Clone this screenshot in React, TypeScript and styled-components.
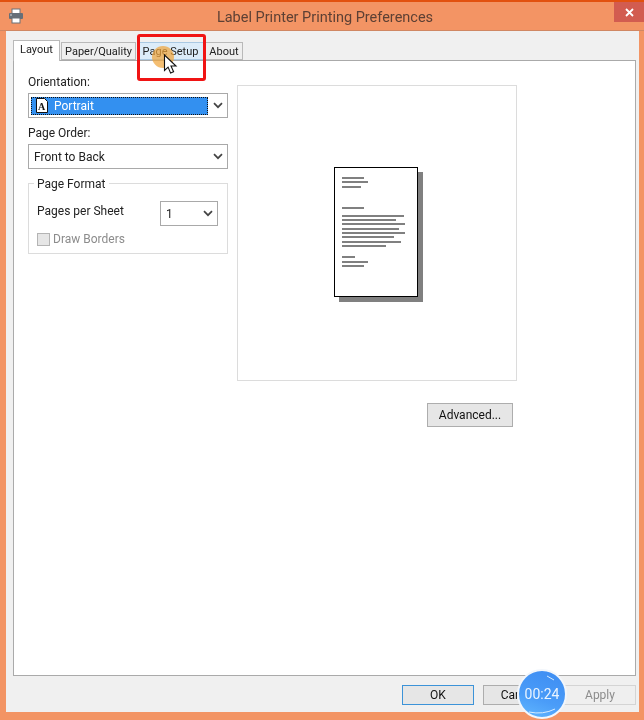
import styled, { createGlobalStyle } from "styled-components";

const GlobalStyle = createGlobalStyle`
  html, body {
    margin: 0;
    padding: 0;
    background: #f39464;
  }
  * {
    box-sizing: border-box;
  }
`;

const Screen = styled.div`
  position: relative;
  width: 644px;
  height: 720px;
  overflow: hidden;
  background: #f39464;
  font-family: Roboto, "Liberation Sans", sans-serif;
  font-size: 12px;
  color: #222;
  border-top: 2px solid #e2510f;
  filter: blur(0.3px);
`;
const TitleBar = styled.div`
  position: relative;
  height: 29px;
  display: flex;
  align-items: center;
  justify-content: center;
  padding: 2px 0 0 6px;
  font-size: 14.5px;
  color: #5d4034;
  border-bottom: 1px solid #d08763;
`;
const AppIcon = styled.svg`
  position: absolute;
  left: 8px;
  top: 6px;
`;
const CloseButton = styled.div`
  position: absolute;
  right: 0;
  top: 0;
  width: 30px;
  height: 20px;
  background: #d25c50;
  display: flex;
  align-items: center;
  justify-content: center;
`;
const Dialog = styled.div`
  margin: 0 5px 0 6px;
  height: 681px;
  background: #f0f0f0;
  padding: 8px 0 0 7px;
`;
const Tabs = styled.div`
  display: flex;
  align-items: flex-end;
  height: 21px;
  position: relative;
  z-index: 1;
  font-size: 11px;
`;
const Tab = styled.div<{ $active?: boolean; $hover?: boolean; $w: number }>`
  width: ${(p) => p.$w}px;
  height: ${(p) => (p.$active ? 21 : 18)}px;
  margin-right: 1px;
  margin-bottom: ${(p) => (p.$active ? -1 : 0)}px;
  padding-bottom: ${(p) => (p.$active ? 3 : 0)}px;
  border: 1px solid ${(p) => (p.$hover ? "#a9c8e2" : "#b9b9b9")};
  border-bottom: ${(p) => (p.$active ? "none" : undefined)};
  background: ${(p) => (p.$active ? "#fff" : p.$hover ? "#dcecf9" : "#efefef")};
  display: flex;
  align-items: center;
  justify-content: center;
  white-space: nowrap;
`;
const Panel = styled.div`
  width: 623px;
  height: 616px;
  background: #fff;
  border: 1px solid #aaa;
  padding: 12px 0 0 14px;
  display: flex;
  gap: 9px;
`;
const LeftColumn = styled.div`
  width: 200px;
  display: flex;
  flex-direction: column;
`;
const FieldLabel = styled.div<{ $top?: number }>`
  height: 16px;
  line-height: 18px;
  margin-top: ${(p) => p.$top ?? 0}px;
  margin-bottom: 4px;
`;
const Select = styled.div<{ $w?: number }>`
  width: ${(p) => p.$w ?? 200}px;
  height: 25px;
  border: 1px solid #a9a9a9;
  background: #fff;
  display: flex;
  align-items: center;
  padding: 0 4px 0 5px;
  justify-content: space-between;
`;
const SelectedValue = styled.div`
  width: 177px;
  height: 18px;
  margin-left: -3px;
  background: #3390f0;
  border: 1px dotted #111;
  color: #fff;
  display: flex;
  align-items: center;
  gap: 6px;
  padding-left: 4px;
`;
const PageGlyph = styled.svg`
  flex: none;
`;
const Group = styled.div`
  position: relative;
  margin-top: 14px;
  height: 71px;
  border: 1px solid #dcdcdc;
  padding: 17px 9px 0 8px;
`;
const Legend = styled.div`
  position: absolute;
  left: 5px;
  top: -8px;
  background: #fff;
  padding: 0 3px;
  line-height: 16px;
`;
const GroupRow = styled.div`
  display: flex;
  justify-content: space-between;
`;
const SheetLabel = styled.div`
  line-height: 16px;
  margin-top: 2px;
`;
const CheckRow = styled.div`
  display: flex;
  align-items: center;
  gap: 3px;
  margin-top: 6px;
  color: #8c8c8c;
`;
const CheckBox = styled.div`
  width: 13px;
  height: 13px;
  border: 1px solid #b4b4b4;
  background: #e6e6e6;
`;
const RightColumn = styled.div`
  width: 280px;
  padding-top: 12px;
  display: flex;
  flex-direction: column;
  align-items: flex-end;
`;
const Preview = styled.div`
  width: 280px;
  height: 296px;
  flex: none;
  border: 1px solid #dcdcdc;
  display: flex;
  align-items: center;
  justify-content: center;
`;
const Paper = styled.svg`
  display: block;
  margin-left: 2px;
  margin-top: 2px;
`;
const Button = styled.div<{ $w?: number; $primary?: boolean; $off?: boolean }>`
  width: ${(p) => p.$w ?? 72}px;
  height: ${(p) => (p.$w ? 24 : 20)}px;
  border: 1px solid ${(p) => (p.$primary ? "#3c93d8" : p.$off ? "#d4d4d4" : "#adadad")};
  color: ${(p) => (p.$off ? "#8c8c8c" : "#111")};
  background: ${(p) => (p.$off ? "#efefef" : "#e6e6e6")};
  display: flex;
  align-items: center;
  justify-content: center;
`;
const AdvancedButton = styled(Button)`
  margin-top: 22px;
  margin-right: 4px;
`;
const Footer = styled.div`
  display: flex;
  justify-content: flex-end;
  gap: 9px;
  padding-top: 9px;
  margin-right: 3px;
`;
const CallOut = styled.div`
  position: absolute;
  z-index: 2;
  left: 137px;
  top: 32px;
  width: 69px;
  height: 47px;
  border: 3px solid #f01414;
  border-radius: 3px;
`;
const ClickDot = styled.div`
  position: absolute;
  z-index: 2;
  left: 152px;
  top: 44px;
  width: 22px;
  height: 22px;
  border-radius: 50%;
  background: rgba(240, 165, 60, 0.72);
`;
const Pointer = styled.svg`
  position: absolute;
  z-index: 3;
  left: 163px;
  top: 52px;
`;
const Timer = styled.div`
  position: absolute;
  z-index: 2;
  left: 517px;
  top: 667px;
  width: 50px;
  height: 50px;
  border-radius: 50%;
  border: 2px solid #f2f6fb;
  background: linear-gradient(200deg, #3d8cf2 0%, #4a9cf8 60%, #62b8ff 100%);
  color: #eaf4ff;
  font-size: 14px;
  display: flex;
  align-items: center;
  justify-content: center;
`;
const TimerShine = styled.svg`
  position: absolute;
  left: 0;
  top: 0;
`;

const lines = [
  [177, 22], [181, 26], [186, 19], [207, 22], [215, 62], [219, 54], [223, 63], [228, 57],
  [232, 63], [236, 52], [241, 59], [245, 44], [256, 13], [261, 26], [265, 22],
];

const Chevron = () => (
  <svg width="10" height="7" viewBox="0 0 10 7">
    <path d="M1 1.2 5 5.2 9 1.2" fill="none" stroke="#444" strokeWidth="1.7" />
  </svg>
);

export default function App() {
  return (
    <>
      <GlobalStyle />
      <Screen>
        <TitleBar>
          <AppIcon width="16" height="16" viewBox="0 0 16 16">
            <rect x="4" y="1" width="8" height="5" fill="#fff" stroke="#6a7076" />
            <rect x="1" y="5" width="14" height="6" rx="1" fill="#666f78" />
            <rect x="4" y="10" width="8" height="5" fill="#fff" stroke="#6a7076" />
            <rect x="2" y="6.5" width="2" height="1" fill="#cfd4d8" />
          </AppIcon>
          Label Printer Printing Preferences
          <CloseButton>
            <svg width="9" height="9" viewBox="0 0 9 9">
              <path d="M1 1 8 8M8 1 1 8" stroke="#fff" strokeWidth="1.8" />
            </svg>
          </CloseButton>
        </TitleBar>
        <Dialog>
          <Tabs>
            <Tab $active $w={47}>Layout</Tab>
            <Tab $w={75}>Paper/Quality</Tab>
            <Tab $hover $w={67}>Page Setup</Tab>
            <Tab $w={38}>About</Tab>
          </Tabs>
          <Panel>
            <LeftColumn>
              <FieldLabel>Orientation:</FieldLabel>
              <Select>
                <SelectedValue>
                  <PageGlyph width="12" height="15" viewBox="0 0 12 15">
                    <path d="M.5.5h8l3 3v11H.5z" fill="#fff" stroke="#111" />
                    <text x="2" y="12" fontSize="10" fontWeight="700" fontFamily="Liberation Serif, serif" fill="#111">A</text>
                  </PageGlyph>
                  Portrait
                </SelectedValue>
                <Chevron />
              </Select>
              <FieldLabel $top={6}>Page Order:</FieldLabel>
              <Select>
                Front to Back
                <Chevron />
              </Select>
              <Group>
                <Legend>Page Format</Legend>
                <GroupRow>
                  <SheetLabel>Pages per Sheet</SheetLabel>
                  <Select $w={58}>
                    1
                    <Chevron />
                  </Select>
                </GroupRow>
                <CheckRow>
                  <CheckBox />
                  Draw Borders
                </CheckRow>
              </Group>
            </LeftColumn>
            <RightColumn>
              <Preview>
                <Paper width="89" height="135" viewBox="334 167 89 135">
                  <rect x="339" y="172" width="84" height="130" fill="#808080" />
                  <rect x="334.5" y="167.5" width="83" height="129" fill="#fff" stroke="#000" />
                  {lines.map(([y, w]) => (
                    <rect key={y} x="342" y={y} width={w} height="2" fill="#808080" />
                  ))}
                </Paper>
              </Preview>
              <AdvancedButton $w={86}>Advanced...</AdvancedButton>
            </RightColumn>
          </Panel>
          <Footer>
            <Button $primary>OK</Button>
            <Button>Cancel</Button>
            <Button $off>Apply</Button>
          </Footer>
        </Dialog>
        <CallOut />
        <ClickDot />
        <Pointer width="16" height="22" viewBox="0 0 16 22">
          <path d="M1.5 1v15.5l3.6-3.4 2.5 6 3-1.3-2.6-5.8h5z" fill="#fff" stroke="#111" strokeWidth="1.1" />
        </Pointer>
        <Timer>
          <TimerShine width="46" height="46" viewBox="0 0 46 46">
            <path d="M28 5l7 4M10 41q14 3 26-3" fill="none" stroke="#d6ecff" strokeWidth="1" />
          </TimerShine>
          00:24
        </Timer>
      </Screen>
    </>
  );
}
